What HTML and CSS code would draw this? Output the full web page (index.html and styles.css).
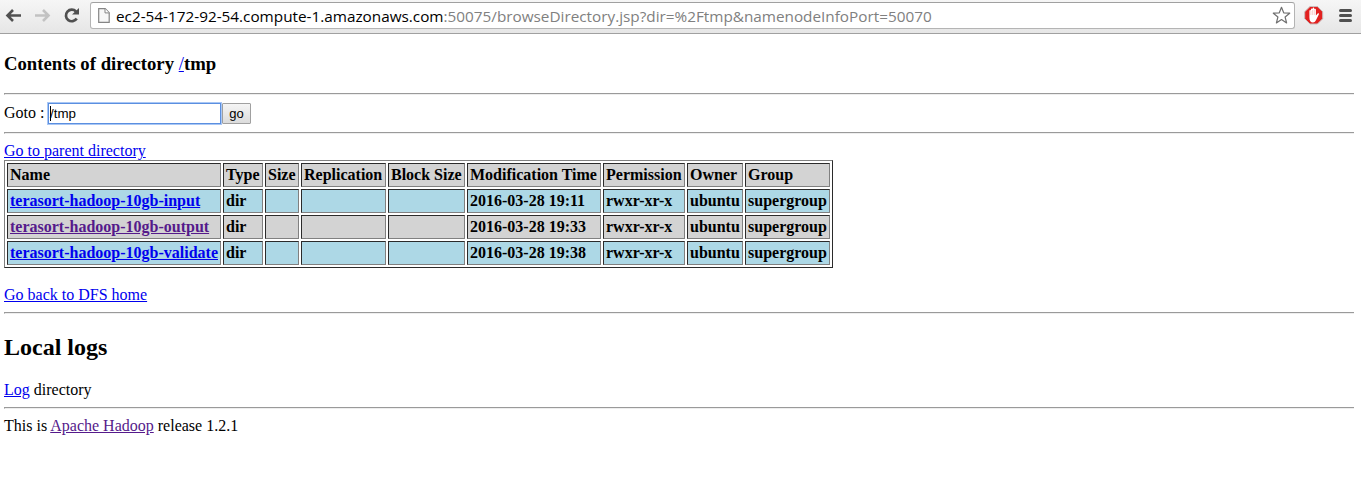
FILE: index.html
```html
<!DOCTYPE html>
<html lang="en">
<head>
<meta charset="utf-8">
<title>HDFS:/tmp</title>
<link rel="stylesheet" href="styles.css">
</head>
<body>
<header class="toolbar">
  <svg class="nav-icons" width="90" height="33" viewBox="0 0 90 33" fill="none">
    <path d="M21 15.500H8M13 10l-5.500 5.500L13 21" stroke="#505050" stroke-width="2.600"/>
    <path d="M35 15.500h13M43 10l5.500 5.500L43 21" stroke="#c2c2c2" stroke-width="2.600"/>
    <path d="M76 11.500A5.800 5.800 0 1 0 76.700 18.500" stroke="#505050" stroke-width="2.700"/>
    <path d="M79 8v6.500h-7z" fill="#505050"/>
  </svg>
  <div class="omnibox">
    <svg class="page-icon" width="12" height="15" viewBox="0 0 12 15"><path d="M.7.7h6.500l4 4v9.600H.7z" fill="#f7f7f7" stroke="#858585" stroke-width="1.200"/><path d="M7 .7v4.200h4.200" fill="#fff" stroke="#858585"/></svg>
    <div class="url">ec2-54-172-92-54.compute-1.amazonaws.com<span class="path">:50075/browseDirectory.jsp?dir=%2Ftmp&amp;namenodeInfoPort=50070</span></div>
    <svg class="star" width="19" height="19" viewBox="0 0 19 19"><path d="M9.500 1.300l2.200 5.500 6 .4-4.600 3.800 1.500 5.900-5.100-3.300-5.100 3.300 1.500-5.900L1.300 7.200l6-.4z" fill="#fff" stroke="#707070" stroke-width="1.200" stroke-linejoin="round"/></svg>
  </div>
  <svg class="menu-icons" width="66" height="33" viewBox="0 0 66 33">
    <path d="M15 6.500h7.400l5.300 5.300v6.900L22.400 24H15l-5.300-5.300v-6.900z" fill="#e2201f" stroke="#c9bcbc"/>
    <path d="M14.400 17V11c0-1.200 1.500-1.200 1.500 0V9.300c0-1.200 1.700-1.200 1.700 0v-.8c0-1.200 1.700-1.200 1.700 0v1c0-1.100 1.600-1.100 1.600 0v6l1.600-1.800c1-.8 1.800 0 1.300.9l-2.500 5c-.8 1.900-1.800 2.900-3.400 2.900-2.200 0-3.500-1.700-3.500-5z" fill="#fff"/>
    <path d="M15.900 11v4M17.600 10v5M19.300 10v5" stroke="#f0a3a0" stroke-width=".5"/>
    <path d="M45.500 10.500h10M45.500 15.500h10M45.500 20.500h10" stroke="#505050" stroke-width="3" stroke-linecap="round"/>
  </svg>
</header>
<main class="page">
  <h3 class="title">Contents of directory <a href="#">/</a>tmp</h3>
  <hr>
  <form class="goto"><span class="goto-label">Goto :</span><span class="dir-input"><span class="caret"></span>/tmp</span><button class="go" type="button">go</button></form>
  <hr>
  <div class="parent"><a href="#">Go to parent directory</a></div>
  <table class="listing">
    <colgroup><col class="c-name"><col class="c-type"><col class="c-size"><col class="c-repl"><col class="c-block"><col class="c-time"><col class="c-perm"><col class="c-owner"><col class="c-group"></colgroup>
    <tr class="gray"><td>Name</td><td>Type</td><td>Size</td><td>Replication</td><td>Block Size</td><td>Modification Time</td><td>Permission</td><td>Owner</td><td>Group</td></tr>
    <tr class="blue"><td><a href="#">terasort-hadoop-10gb-input</a></td><td>dir</td><td></td><td></td><td></td><td>2016-03-28 19:11</td><td>rwxr-xr-x</td><td>ubuntu</td><td>supergroup</td></tr>
    <tr class="gray"><td><a class="visited" href="#">terasort-hadoop-10gb-output</a></td><td>dir</td><td></td><td></td><td></td><td>2016-03-28 19:33</td><td>rwxr-xr-x</td><td>ubuntu</td><td>supergroup</td></tr>
    <tr class="blue"><td><a href="#">terasort-hadoop-10gb-validate</a></td><td>dir</td><td></td><td></td><td></td><td>2016-03-28 19:38</td><td>rwxr-xr-x</td><td>ubuntu</td><td>supergroup</td></tr>
  </table>
  <div class="home"><a href="#">Go back to DFS home</a></div>
  <hr>
  <h2 class="logs">Local logs</h2>
  <div class="log-line"><a href="#">Log</a> directory</div>
  <hr>
  <div class="release">This is <a class="visited" href="#">Apache Hadoop</a> release 1.2.1</div>
</main>
</body>
</html>
```
FILE: styles.css
```css
* { box-sizing: border-box; }
body { margin: 0; background: #fff; color: #000; font: 16px/18px "Liberation Serif", "Times New Roman", serif; overflow: hidden; }
a { color: #0000ee; }
a.visited { color: #551a8b; }

.toolbar { display: flex; height: 34px; background: linear-gradient(#f6f6f6, #e6e6e6); border-bottom: 1px solid #a0a0a0; }
.nav-icons, .menu-icons { flex: none; }
.omnibox { display: flex; flex: none; align-items: center; width: 1205px; height: 27px; margin-top: 2px; padding: 0 3px 0 7px; background: #fff; border: 1px solid #b4b4b4; border-top-color: #a0a0a0; border-radius: 3px; }
.page-icon { flex: none; margin-right: 6px; }
.url { flex: 1; font: 15.3px/24px "Open Sans", "Noto Sans", sans-serif; white-space: nowrap; }
.path { color: #808080; }

.page { padding: 0 7px 0 4px; }
hr { height: 2px; margin: 0; border: 0; border-top: 1px solid #9a9a9a; border-bottom: 1px solid #eee; border-left: 1px solid #9a9a9a; }
.title { margin: 0; padding: 19px 0 18px; font-size: 18.72px; line-height: 22px; }
.title a { font-weight: normal; }
.goto { display: flex; height: 37px; padding-top: 8px; }
.goto-label { width: 44px; padding-top: 1px; }
.dir-input { display: flex; align-items: center; width: 173px; height: 21px; padding-left: 1px; border: 1px solid #5b8fe0; box-shadow: 0 0 0 1px #a9c7f5; font: 13.33px/16px "Liberation Sans", Arial, sans-serif; }
.caret { width: 1px; height: 15px; margin-right: -1px; background: #000; }
.go { width: 29px; height: 21px; margin-left: 1px; padding: 0; border: 1px solid #a0a0a0; border-radius: 1px; background: linear-gradient(#f5f5f5, #dcdcdc); color: #000; font: 13px/16px "Liberation Sans", Arial, sans-serif; }
.parent { height: 26px; padding-top: 8px; }

.listing { width: 829px; height: 108px; table-layout: fixed; border: 1px solid; border-color: #808080 #2b2b2b #2b2b2b #808080; border-spacing: 2px; font-weight: bold; }
td { height: 24px; padding: 0 2px; border: 1px solid; border-color: #2b2b2b #808080 #808080 #2b2b2b; white-space: nowrap; }
.gray { background: #d3d3d3; }
.blue { background: #add8e6; }
.c-name { width: 214px; }
.c-type { width: 40px; }
.c-size { width: 34px; }
.c-repl { width: 85px; }
.c-block { width: 77px; }
.c-time { width: 134px; }
.c-perm { width: 82px; }
.c-owner { width: 56px; }
.c-group { width: 85px; }

.home { height: 44px; padding-top: 18px; }
.logs { margin: 0; padding: 20px 0; font-size: 24px; line-height: 27px; }
.log-line { height: 26px; }
.release { padding-top: 8px; }
```
